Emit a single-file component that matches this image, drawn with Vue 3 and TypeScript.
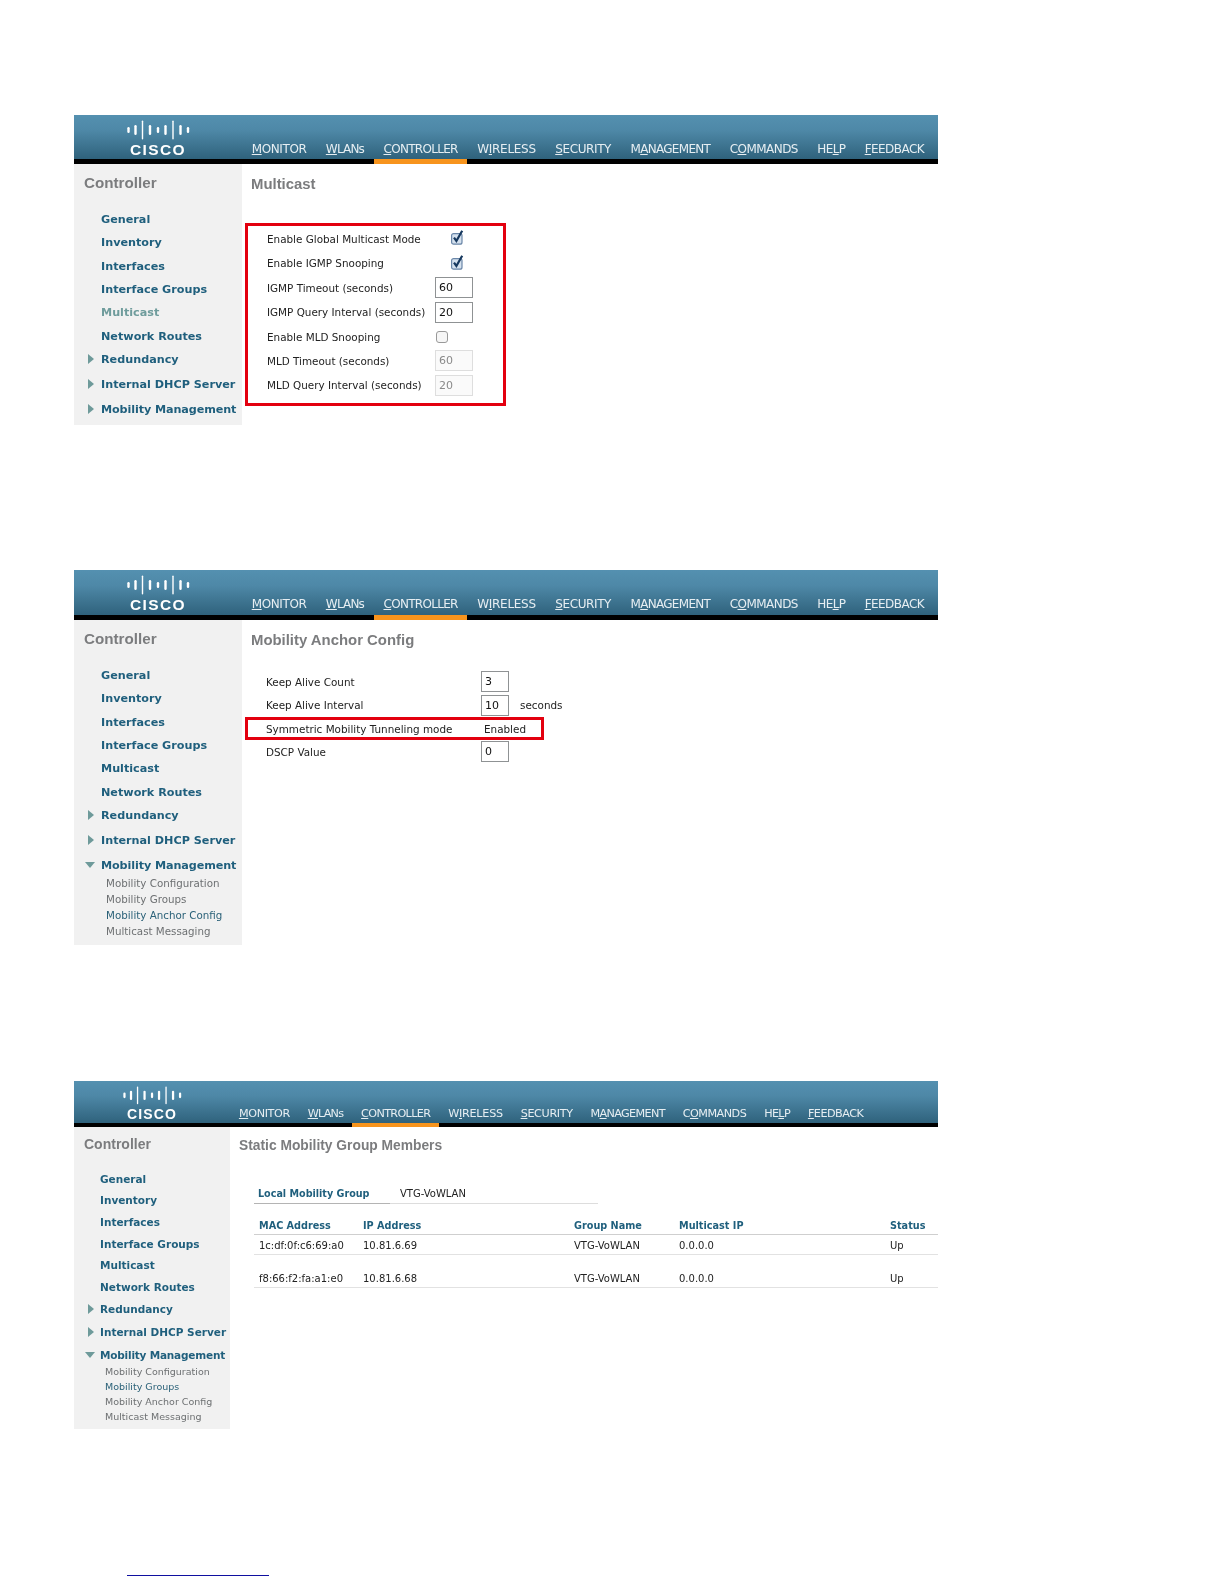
<script setup lang="ts">
interface NavItem { pre: string; key: string; post: string; track: number; active?: boolean }
interface SideItem { label: string; arrow?: 'right' | 'down'; active?: boolean; gapTop?: boolean; tight?: boolean; subs?: { label: string; active?: boolean }[] }

const nav: NavItem[] = [
  { pre: '', key: 'M', post: 'ONITOR', track: -0.033 },
  { pre: '', key: 'W', post: 'LANs', track: -0.068 },
  { pre: '', key: 'C', post: 'ONTROLLER', track: -0.058, active: true },
  { pre: 'W', key: 'I', post: 'RELESS', track: -0.023 },
  { pre: '', key: 'S', post: 'ECURITY', track: -0.032 },
  { pre: 'M', key: 'A', post: 'NAGEMENT', track: -0.058 },
  { pre: 'C', key: 'O', post: 'MMANDS', track: -0.045 },
  { pre: 'HE', key: 'L', post: 'P', track: -0.056 },
  { pre: '', key: 'F', post: 'EEDBACK', track: -0.045 }
]

const mobilitySubs = (active: string) =>
  ['Mobility Configuration', 'Mobility Groups', 'Mobility Anchor Config', 'Multicast Messaging'].map((label) => ({
    label,
    active: label === active
  }))

const sideItems = (activeItem: string, subs?: { label: string; active?: boolean }[]): SideItem[] => [
  { label: 'General' },
  { label: 'Inventory' },
  { label: 'Interfaces' },
  { label: 'Interface Groups' },
  { label: 'Multicast', active: activeItem === 'Multicast' },
  { label: 'Network Routes' },
  { label: 'Redundancy', arrow: 'right' },
  { label: 'Internal DHCP Server', arrow: 'right', gapTop: true },
  { label: 'Mobility Management', arrow: subs ? 'down' : 'right', gapTop: true, tight: true, subs }
]

const panels = [
  { id: 'a', title: 'Multicast', side: sideItems('Multicast') },
  { id: 'b', title: 'Mobility Anchor Config', side: sideItems('', mobilitySubs('Mobility Anchor Config')) },
  { id: 'c', title: 'Static Mobility Group Members', side: sideItems('', mobilitySubs('Mobility Groups')) }
]

const multicastRows = [
  { label: 'Enable Global Multicast Mode', type: 'check' },
  { label: 'Enable IGMP Snooping', type: 'check' },
  { label: 'IGMP Timeout (seconds)', type: 'input', value: '60' },
  { label: 'IGMP Query Interval (seconds)', type: 'input', value: '20' },
  { label: 'Enable MLD Snooping', type: 'empty' },
  { label: 'MLD Timeout (seconds)', type: 'disabled', value: '60' },
  { label: 'MLD Query Interval (seconds)', type: 'disabled', value: '20' }
]

const anchorRows = [
  { label: 'Keep Alive Count', value: '3' },
  { label: 'Keep Alive Interval', value: '10', unit: 'seconds' },
  { label: 'Symmetric Mobility Tunneling mode', text: 'Enabled', marked: true },
  { label: 'DSCP Value', value: '0' }
]

const members = [
  { mac: '1c:df:0f:c6:69:a0', ip: '10.81.6.69' },
  { mac: 'f8:66:f2:fa:a1:e0', ip: '10.81.6.68' }
]

const logoBars = [
  { x: 1.5, h: 6 }, { x: 8.5, h: 10 }, { x: 15.5, h: 19 }, { x: 23, h: 10 }, { x: 31, h: 6 },
  { x: 38.5, h: 10 }, { x: 46, h: 19 }, { x: 53.5, h: 10 }, { x: 61, h: 6 }
]
</script>

<template>
  <div class="page">
    <section v-for="p in panels" :key="p.id" class="panel" :class="'panel-' + p.id">
      <header class="topbar">
        <div class="brand">
          <svg class="bars" viewBox="0 0 63 20" aria-hidden="true">
            <rect v-for="b in logoBars" :key="b.x" :x="b.x - (b.h === 19 ? 0.7 : 1.2)" :y="10 - b.h / 2" :width="b.h === 19 ? 1.4 : 2.4" :height="b.h" :rx="b.h === 19 ? 0.7 : 1.2" fill="#fff" />
          </svg>
          <span class="wordmark">CISCO</span>
        </div>
        <nav class="menu">
          <span
            v-for="n in nav"
            :key="n.key + n.post"
            class="menu-item"
            :class="{ on: n.active }"
            :style="{ letterSpacing: n.track + 'em' }"
          >{{ n.pre }}<u>{{ n.key }}</u>{{ n.post }}</span>
        </nav>
      </header>

      <div class="body">
        <aside class="side">
          <h2 class="side-head">Controller</h2>
          <ul class="side-list">
            <li v-for="s in p.side" :key="s.label" :class="{ gap: s.gapTop }">
              <div class="side-row" :class="{ active: s.active, tight: s.tight }">
                <svg v-if="s.arrow === 'right'" class="arrow right" viewBox="0 0 6 10" aria-hidden="true"><path d="M0 0L6 5L0 10Z" /></svg>
                <svg v-if="s.arrow === 'down'" class="arrow down" viewBox="0 0 10 6" aria-hidden="true"><path d="M0 0H10L5 6Z" /></svg>
                {{ s.label }}
              </div>
              <ul v-if="s.subs" class="sub-list">
                <li v-for="c in s.subs" :key="c.label" class="sub-row" :class="{ active: c.active }">{{ c.label }}</li>
              </ul>
            </li>
          </ul>
        </aside>

        <main class="content">
          <h1 class="title">{{ p.title }}</h1>

          <div v-if="p.id === 'a'" class="mc-form">
            <div v-for="r in multicastRows" :key="r.label" class="mc-row">
              <span>{{ r.label }}</span>
              <svg v-if="r.type === 'check'" class="check" viewBox="0 0 13 15" aria-hidden="true">
                <rect x="0.6" y="3.6" width="10.4" height="10.6" rx="2" fill="#d5e1ee" stroke="#6a86a8" stroke-width="1.2" />
                <path d="M3 7.6L5.4 11L11.2 0.8" fill="none" stroke="#17395f" stroke-width="2.2" />
              </svg>
              <span v-else-if="r.type === 'empty'" class="unchecked"></span>
              <span v-else class="field mc-field" :class="{ disabled: r.type === 'disabled' }">{{ r.value }}</span>
            </div>
          </div>

          <div v-else-if="p.id === 'b'" class="an-form">
            <div v-for="r in anchorRows" :key="r.label" class="an-row" :class="{ marked: r.marked }">
              <span>{{ r.label }}</span>
              <span v-if="r.text" class="an-text">{{ r.text }}</span>
              <span v-else class="an-control">
                <span class="field an-field">{{ r.value }}</span>
                <span v-if="r.unit">{{ r.unit }}</span>
              </span>
            </div>
          </div>

          <div v-else class="members">
            <div class="local">
              <span class="local-key">Local Mobility Group</span>
              <span class="local-val">VTG-VoWLAN</span>
            </div>
            <div class="grid-row grid-head">
              <span>MAC Address</span><span>IP Address</span><span>Group Name</span><span>Multicast IP</span><span>Status</span>
            </div>
            <div v-for="(m, i) in members" :key="m.mac" class="grid-row grid-body" :class="{ later: i > 0 }">
              <span>{{ m.mac }}</span><span>{{ m.ip }}</span><span>VTG-VoWLAN</span><span>0.0.0.0</span><span>Up</span>
            </div>
          </div>
        </main>
      </div>
    </section>
    <div class="foot-rule"></div>
  </div>
</template>

<style>
html, body { margin: 0; background: #fff; }
</style>

<style scoped>
.page {
  width: 864px;
  height: 1584px;
  box-sizing: border-box;
  padding: 115px 0 0;
  margin-left: 74px;
  font-family: "DejaVu Sans", Verdana, sans-serif;
  overflow: hidden;
}
ul { list-style: none; margin: 0; padding: 0; }
h1, h2 { margin: 0; }

.panel { --side: 168px; --bar: 44px; --black: 5px; --pad: 9.72px; --row: 23.4px; --sub: 16px; --gap: 1.6px; filter: blur(0.3px); }
.panel-b { --bar: 45px; margin-top: 145px; }
.panel-c { --side: 156px; --bar: 42px; --black: 4px; --pad: 8.92px; --row: 21.7px; --sub: 15px; --gap: 1.5px; margin-top: 136px; }

.topbar {
  display: flex;
  height: var(--bar);
  border-bottom: var(--black) solid #000;
  background: linear-gradient(#5490b0, #4e88a7 35%, #2f627c);
}
.brand {
  position: relative;
  width: var(--side);
  flex: none;
  display: flex;
  flex-direction: column;
  align-items: center;
}
.bars { width: 63px; height: 20px; margin-top: 5px; display: block; }
.wordmark {
  font: 700 15.5px/14px "Liberation Sans", Arial, sans-serif;
  letter-spacing: 1.4px;
  color: #fff;
  margin-top: 3px;
}
.panel-c .bars { width: 59px; height: 18.7px; margin-top: 5px; }
.panel-c .wordmark { font-size: 14px; letter-spacing: 1.1px; margin-top: 2px; }

.menu { display: flex; align-items: stretch; }
.menu-item {
  padding: 0 var(--pad);
  margin-bottom: calc(0px - var(--black));
  border-bottom: var(--black) solid transparent;
  color: #e6eef2;
  font-size: 12px;
  line-height: 68px;
  height: var(--bar);
  white-space: nowrap;
}
.panel-b .menu-item { line-height: 69px; }
.panel-c .menu-item { font-size: 11.2px; line-height: 66px; }
.menu-item.on { border-bottom-color: #f7941d; }

.body { display: flex; }
.side {
  width: var(--side);
  flex: none;
  box-sizing: border-box;
  background: #f1f1f1;
  min-height: 261px;
}
.panel-b .side { min-height: 325px; }
.panel-c .side { min-height: 302px; }
.side-head {
  height: 36px;
  padding-left: 10px;
  margin-bottom: 7.9px;
  font: 700 15.2px/37px "Liberation Sans", Arial, sans-serif;
  color: #7b7c7e;
}
.panel-c .side-head { height: 34px; line-height: 34px; font-size: 14px; margin-bottom: 7.7px; }
.side-row {
  position: relative;
  height: var(--row);
  line-height: var(--row);
  padding-left: 27px;
  font-size: 11.2px;
  font-weight: 700;
  color: #1f5f7d;
  white-space: nowrap;
}
.side-row.tight { letter-spacing: -0.1px; }
.panel-c .side-row { padding-left: 26px; font-size: 10.5px; }
.panel-c .side-row.tight { letter-spacing: -0.2px; }
.side-row.active { color: #6f9c9c; }
.gap { margin-top: var(--gap); }
.arrow { position: absolute; fill: #6e9a9a; }
.arrow.right { width: 6px; height: 10px; left: 14px; top: calc(50% - 6px); }
.arrow.down { width: 10px; height: 6px; left: 11px; top: calc(50% - 4px); }
.sub-list { margin-top: -2.7px; }
.sub-row {
  height: var(--sub);
  line-height: var(--sub);
  padding-left: 32px;
  font-size: 10.3px;
  color: #6d7072;
  white-space: nowrap;
}
.panel-c .sub-row { padding-left: 31px; font-size: 9.5px; }
.sub-row.active { color: #2a6178; }

.content { flex: 1; min-width: 0; }
.title {
  height: 38px;
  padding-left: 9px;
  font: 700 14.9px/40px "Liberation Sans", Arial, sans-serif;
  color: #7b7c7e;
}
.panel-c .title { height: 36px; line-height: 37px; font-size: 13.8px; }

.mc-form {
  width: 261px;
  height: 183px;
  box-sizing: border-box;
  margin: 21px 0 0 3px;
  padding: 0.8px 0 0 19px;
  border: 3px solid #e3000f;
  font-size: 10.4px;
  color: #222;
}
.mc-row {
  display: grid;
  grid-template-columns: 168px 1fr;
  align-items: center;
  height: 24.4px;
  white-space: nowrap;
}
.check { width: 13px; height: 15px; margin: -2px 0 0 16px; display: block; }
.unchecked {
  width: 10px; height: 10px;
  margin-left: 1px;
  border: 1px solid #999;
  border-radius: 3px;
  background: #f6f6f6;
}
.field {
  display: block;
  box-sizing: border-box;
  border: 1px solid #8f9294;
  background: #fff;
  padding-left: 3px;
  color: #111;
  font-size: 11px;
}
.mc-field { width: 38px; height: 21px; line-height: 20px; }
.field.disabled { border-color: #dedede; color: #8a8a8a; background: #fafafa; }

.an-form { margin: 12.3px 0 0 3px; font-size: 10.4px; color: #222; }
.an-row {
  display: grid;
  grid-template-columns: 215px 1fr;
  align-items: center;
  box-sizing: border-box;
  width: 299px;
  height: 23.3px;
  padding-left: 21px;
  white-space: nowrap;
}
.an-row.marked { outline: 3px solid #e3000f; outline-offset: -3px; }
.an-text { padding-left: 3px; }
.an-control { display: flex; align-items: center; gap: 11px; }
.an-field { width: 28px; height: 21px; line-height: 20px; }

.members { margin-left: 24px; margin-top: 20px; font-size: 10px; color: #222; }
.local { display: flex; width: 344px; height: 21px; line-height: 21px; }
.local-key {
  width: 136px;
  box-sizing: border-box;
  padding-left: 4px;
  border-bottom: 1px solid #b4b4b4;
  font-size: 9.6px;
  font-weight: 700;
  color: #1f5f7d;
}
.local-val { flex: 1; padding-left: 10px; border-bottom: 1px solid #ddd; }
.grid-row {
  display: grid;
  grid-template-columns: 104px 211px 105px 211px 53px;
  align-items: end;
  box-sizing: border-box;
  border-bottom: 1px solid #e2e2e2;
  white-space: nowrap;
}
.grid-row span { padding-left: 5px; }
.grid-head {
  margin-top: 13px;
  height: 18px;
  line-height: 14px;
  padding-bottom: 1px;
  font-size: 9.7px;
  font-weight: 700;
  color: #1f5f7d;
  border-bottom-color: #cfcfcf;
}
.grid-body { height: 20px; line-height: 14px; padding-bottom: 1px; }
.grid-body.later { height: 33px; }

.foot-rule {
  width: 142px;
  height: 1px;
  margin: 146px 0 0 53px;
  background: #1010a0;
}
</style>
